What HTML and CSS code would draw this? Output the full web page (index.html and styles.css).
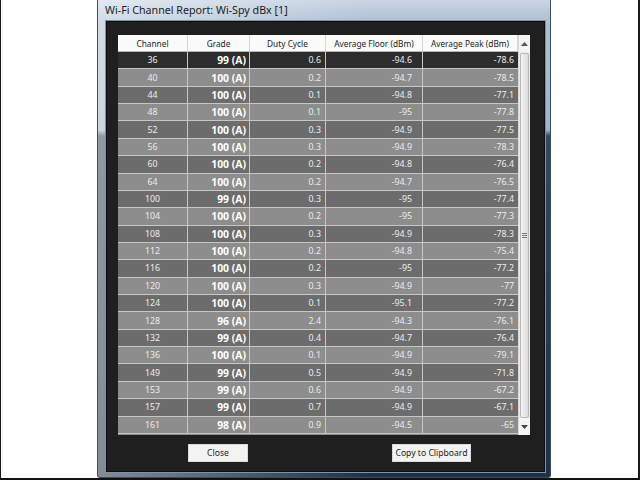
FILE: index.html
```html
<!DOCTYPE html>
<html lang="en">
<head>
  <meta charset="UTF-8" />
  <title>Wi-Fi Channel Report</title>
  <link rel="stylesheet" href="styles.css">
</head>
<body>
  <div class="page">
    <!-- Report window -->
    <div class="window">
      <div class="titlebar">Wi-Fi Channel Report: Wi-Spy dBx [1]</div>
      <div class="client">
        <div class="grid-wrap">
          <div class="grid">
            <div class="row head">
              <div class="cell">Channel</div>
              <div class="cell">Grade</div>
              <div class="cell">Duty Cycle</div>
              <div class="cell">Average Floor (dBm)</div>
              <div class="cell">Average Peak (dBm)</div>
            </div>
            <div id="rows"></div>
          </div>
          <!-- Vertical scrollbar -->
          <div class="scrollbar">
            <div class="arrow up"><svg width="7" height="4" viewBox="0 0 7 4"><path d="M0 4 L3.5 0 L7 4 Z" fill="#555"/></svg></div>
            <div class="track">
              <div class="thumb"><span class="grip"></span></div>
            </div>
            <div class="arrow down"><svg width="7" height="4" viewBox="0 0 7 4"><path d="M0 0 L3.5 4 L7 0 Z" fill="#444"/></svg></div>
          </div>
        </div>
        <div class="buttons">
          <button class="btn close">Close</button>
          <button class="btn copy">Copy to Clipboard</button>
        </div>
      </div>
    </div>
  </div>
  <script>
    const data = [
      ['36', '99 (A)', '0.6', '-94.6', '-78.6'],
      ['40', '100 (A)', '0.2', '-94.7', '-78.5'],
      ['44', '100 (A)', '0.1', '-94.8', '-77.1'],
      ['48', '100 (A)', '0.1', '-95', '-77.8'],
      ['52', '100 (A)', '0.3', '-94.9', '-77.5'],
      ['56', '100 (A)', '0.3', '-94.9', '-78.3'],
      ['60', '100 (A)', '0.2', '-94.8', '-76.4'],
      ['64', '100 (A)', '0.2', '-94.7', '-76.5'],
      ['100', '99 (A)', '0.3', '-95', '-77.4'],
      ['104', '100 (A)', '0.2', '-95', '-77.3'],
      ['108', '100 (A)', '0.3', '-94.9', '-78.3'],
      ['112', '100 (A)', '0.2', '-94.8', '-75.4'],
      ['116', '100 (A)', '0.2', '-95', '-77.2'],
      ['120', '100 (A)', '0.3', '-94.9', '-77'],
      ['124', '100 (A)', '0.1', '-95.1', '-77.2'],
      ['128', '96 (A)', '2.4', '-94.3', '-76.1'],
      ['132', '99 (A)', '0.4', '-94.7', '-76.4'],
      ['136', '100 (A)', '0.1', '-94.9', '-79.1'],
      ['149', '99 (A)', '0.5', '-94.9', '-71.8'],
      ['153', '99 (A)', '0.6', '-94.9', '-67.2'],
      ['157', '99 (A)', '0.7', '-94.9', '-67.1'],
      ['161', '98 (A)', '0.9', '-94.5', '-65']
    ];
    const rows = document.getElementById('rows');
    data.forEach((r, i) => {
      const row = document.createElement('div');
      row.className = 'row ' + (i === 0 ? 'selected' : (i % 2 ? 'light' : 'dark'));
      r.forEach(v => {
        const c = document.createElement('div');
        c.className = 'cell';
        c.textContent = v;
        row.appendChild(c);
      });
      rows.appendChild(row);
    });
  </script>
</body>
</html>
```

FILE: styles.css
```css
* {
  margin: 0;
  padding: 0;
  box-sizing: border-box;
}
body {
  background: #fff;
  font-family: 'Noto Sans', 'DejaVu Sans', sans-serif;
}
/* Photo frame around the screenshot */
.page {
  width: 640px;
  height: 480px;
  background: #fff;
  border-left: 1px solid #1a1a1a;
  border-right: 2px solid #1a1a1a;
  border-bottom: 2px solid #111;
  overflow: hidden;
}
/* Aero style window */
.window {
  width: 454px;
  height: 478px;
  margin-left: 96px;
  display: flex;
  flex-direction: column;
  padding: 0 5px 5px 8px;
  border: 1px solid #3a4d63;
  border-top: none;
  border-radius: 0 0 3px 3px;
  background:
    linear-gradient(to right, rgba(255,255,255,0.45), rgba(255,255,255,0) 60%),
    linear-gradient(to bottom, #c9d6e4 0, #aebfd2 22px, #9fb4ca 130px, #31495f 136px, #1d3045 100%);
}
.titlebar {
  height: 21px;
  flex: none;
  font-size: 10.7px;
  line-height: 20px;
  color: #1b1b1b;
  margin-left: -1px;
  white-space: nowrap;
}
.client {
  flex: 1;
  background: #1f1f1f;
  border: 1px solid #0d0d0d;
  outline: 1px solid #7e93ab;
  display: flex;
  flex-direction: column;
  padding: 13px 14px 0 11px;
}
/* Table area */
.grid-wrap {
  display: flex;
  height: 400px;
  flex: none;
}
.grid {
  width: 400px;
  background: #8a8a8a;
}
.row {
  display: grid;
  grid-template-columns: 70px 62px 76px 97px 95px;
  height: 17.36px;
  font-size: 8.8px;
  color: #ececec;
}
.row .cell {
  display: flex;
  align-items: center;
  justify-content: flex-end;
  padding-right: 4px;
  border-right: 1px solid #c6c6c6;
  border-bottom: 1px solid #c6c6c6;
  white-space: nowrap;
}
.row .cell:first-child {
  justify-content: center;
  padding-right: 0;
}
.row .cell:nth-child(2) {
  font-weight: 700;
  font-size: 10.4px;
  color: #fff;
  padding-right: 3px;
}
.row .cell:nth-child(4) {
  padding-right: 10px;
}
.row .cell:last-child {
  border-right: none;
}
.row.head {
  height: 17px;
  background: #fbfbfb;
  color: #222;
}
.row.head .cell {
  justify-content: center;
  padding-right: 0;
  border-right: 1px solid #d6d6d6;
  border-bottom: 1px solid #b8b8b8;
  font-weight: 400;
  font-size: 8.3px;
  color: #222;
}
.row.selected { background: #2d2d2d; }
.row.light { background: #8d8d8d; }
.row.dark { background: #6c6c6c; }
/* Scrollbar */
.scrollbar {
  width: 13px;
  display: flex;
  flex-direction: column;
  background: #e9e9e9;
  border-left: 1px solid #d8d8d8;
}
.arrow {
  height: 17px;
  flex: none;
  display: flex;
  align-items: center;
  justify-content: center;
  background: #f4f4f4;
}
.track {
  flex: 1;
  padding: 1px 1px 0;
  display: flex;
}
.thumb {
  flex: 1;
  border: 1px solid #b9b9b9;
  border-radius: 2px;
  background: linear-gradient(to right, #f2f2f2, #dcdcdc);
  display: flex;
  align-items: center;
  justify-content: center;
}
.grip {
  width: 5px;
  height: 5px;
  border-top: 1px solid #777;
  border-bottom: 1px solid #777;
  position: relative;
}
.grip::after {
  content: '';
  position: absolute;
  left: 0;
  right: 0;
  top: 1px;
  border-top: 1px solid #777;
}
/* Buttons */
.buttons {
  display: flex;
  gap: 144px;
  padding-left: 70px;
  margin-top: 9px;
}
.btn {
  height: 18px;
  padding: 0;
  font-family: 'Noto Sans', 'DejaVu Sans', sans-serif;
  font-size: 8.6px;
  color: #222;
  background: #f3f3f3;
  border: 1px solid #dadada;
  white-space: nowrap;
}
.btn.close { width: 60px; }
.btn.copy { width: 79px; }
```
